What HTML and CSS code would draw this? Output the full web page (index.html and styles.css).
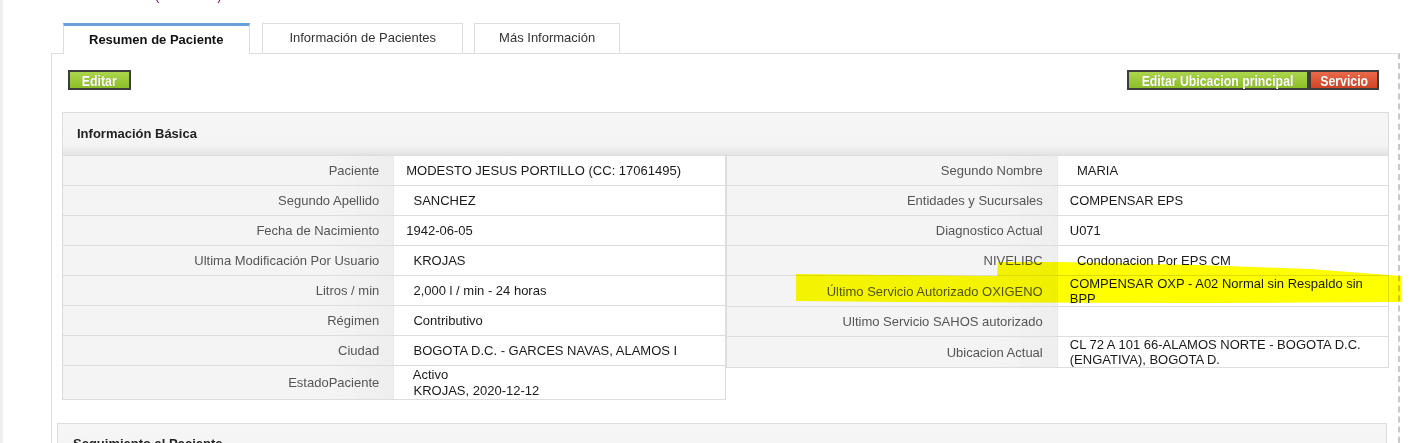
FILE: index.html
```html
<!DOCTYPE html>
<html lang="es">
<head>
  <meta charset="UTF-8">
  <title>Resumen de Paciente</title>
  <link rel="stylesheet" href="styles.css">
</head>
<body>

<div class="page">
  <h2 class="patient-title">(17061495)</h2>

  <ul class="tab-nav">
    <li class="tab active">Resumen de Paciente</li>
    <li class="tab">Información de Pacientes</li>
    <li class="tab">Más Información</li>
  </ul>

  <div class="tab-panel">
    <div class="toolbar">
      <button class="btn btn-green btn-editar"><span>Editar</span></button>
      <div class="toolbar-right">
        <button class="btn btn-green btn-ubicacion"><span>Editar Ubicacion principal</span></button>
        <button class="btn btn-red btn-servicio"><span>Servicio</span></button>
      </div>
    </div>

    <section class="box">
      <div class="box-header">Información Básica</div>
      <div class="info-grid">
        <table class="info-table">
          <tr><td class="label">Paciente</td><td class="value">MODESTO JESUS PORTILLO (CC: 17061495)</td></tr>
          <tr><td class="label">Segundo Apellido</td><td class="value">&nbsp; SANCHEZ</td></tr>
          <tr><td class="label">Fecha de Nacimiento</td><td class="value">1942-06-05</td></tr>
          <tr><td class="label">Ultima Modificación Por Usuario</td><td class="value">&nbsp; KROJAS</td></tr>
          <tr><td class="label">Litros / min</td><td class="value">&nbsp; 2,000 l / min - 24 horas</td></tr>
          <tr><td class="label">Régimen</td><td class="value">&nbsp; Contributivo</td></tr>
          <tr><td class="label">Ciudad</td><td class="value">&nbsp; BOGOTA D.C. - GARCES NAVAS, ALAMOS I</td></tr>
          <tr class="tall"><td class="label">EstadoPaciente</td><td class="value">&nbsp; Activo<br>&nbsp; KROJAS, 2020-12-12</td></tr>
        </table>
        <table class="info-table">
          <tr><td class="label">Segundo Nombre</td><td class="value">&nbsp; MARIA</td></tr>
          <tr><td class="label">Entidades y Sucursales</td><td class="value">COMPENSAR EPS</td></tr>
          <tr><td class="label">Diagnostico Actual</td><td class="value">U071</td></tr>
          <tr><td class="label">NIVELIBC</td><td class="value">&nbsp; Condonacion Por EPS CM</td></tr>
          <tr><td class="label">Último Servicio Autorizado OXIGENO</td><td class="value">COMPENSAR OXP - A02 Normal sin Respaldo sin BPP</td></tr>
          <tr><td class="label">Ultimo Servicio SAHOS autorizado</td><td class="value"></td></tr>
          <tr><td class="label">Ubicacion Actual</td><td class="value">CL 72 A 101 66-ALAMOS NORTE - BOGOTA D.C. (ENGATIVA), BOGOTA D.</td></tr>
        </table>
      </div>
    </section>

    <section class="box box-follow">
      <div class="box-header">Seguimiento al Paciente</div>
    </section>
  </div>
</div>

<!-- marker highlight drawn over the screenshot -->
<svg class="marker" width="1417" height="443" viewBox="0 0 1417 443">
  <polygon points="796,274 997,276 998,262 1060,262 1200,265 1310,269 1401,276 1402,302 1200,303 900,302 796,301" fill="#ffff00"/>
</svg>

</body>
</html>
```

FILE: styles.css
```css
* {
  box-sizing: border-box;
}

body {
  margin: 0;
  font-family: "Liberation Sans", Arial, sans-serif;
  font-size: 13px;
  color: #222;
  background: linear-gradient(to right, #efefef 0, #efefef 3px, #fff 3px);
  overflow: hidden;
  position: relative;
}

.page {
  padding: 0 17px 0 51px;
}

.patient-title {
  margin: -12px 0 0;
  padding-left: 104px;
  font-size: 13px;
  line-height: 15px;
  font-weight: normal;
  color: #800080;
}

/* Tabs */
.tab-nav {
  list-style: none;
  margin: 20px 0 0;
  padding: 0 0 0 12px;
  display: flex;
  align-items: flex-start;
  gap: 12px;
}

.tab {
  height: 30px;
  padding: 0 26px;
  border: 1px solid #ddd;
  border-bottom: none;
  line-height: 28px;
  color: #333;
  background: #fff;
}

.tab:last-child {
  margin-left: -1px;
  padding: 0 24px;
}

.tab.active {
  height: 31px;
  margin-bottom: -1px;
  padding: 0 26px 0 25px;
  border-top: 3px solid #6a9fdc;
  line-height: 27px;
  font-weight: bold;
  color: #111;
  position: relative;
}

.tab-panel {
  border-top: 1px solid #ddd;
  border-left: 1px solid #ddd;
  border-right: 2px dashed #c8c8c8;
  padding: 16px 9px 0 10px;
  height: 420px;
}

/* Toolbar buttons */
.toolbar {
  display: flex;
  justify-content: space-between;
  margin: 0 10px 0 6px;
}

.toolbar-right {
  display: flex;
}

.btn {
  display: flex;
  justify-content: center;
  align-items: center;
  height: 20px;
  padding: 0;
  border: 2px solid #3c3c3c;
  font-family: "Liberation Sans", Arial, sans-serif;
  font-weight: bold;
  font-size: 15px;
  line-height: 15px;
  color: #fff;
  text-shadow: 0 0 1px rgba(0, 0, 0, 0.25);
  cursor: pointer;
  overflow: visible;
}

/* narrow face is not installed, squeeze the bold one */
.btn span {
  display: inline-block;
  white-space: nowrap;
  transform: scaleX(0.82);
  padding-top: 1px;
}

.btn-editar {
  width: 63px;
}

.btn-ubicacion {
  width: 182px;
}

.btn-servicio {
  width: 70px;
}

.btn-green {
  background: linear-gradient(#acd64c, #8cbf27);
}

.btn-red {
  background: linear-gradient(#e96a4c, #d04526);
}

/* Boxes */
.box {
  margin-top: 22px;
}

.box-header {
  height: 43px;
  padding: 0 14px;
  border: 1px solid #ddd;
  border-bottom: none;
  line-height: 42px;
  font-weight: bold;
  color: #222;
  background: linear-gradient(to bottom, #f6f6f6 0, #f4f4f4 78%, #e2e2e2 100%);
}

.box-follow {
  margin: 23px 2px 0 -5px;
}

.box-follow .box-header {
  padding-left: 15px;
  line-height: 40px;
}

.info-grid {
  display: flex;
  align-items: flex-start;
}

.info-table {
  flex: 1;
  border-collapse: collapse;
  table-layout: fixed;
  border: 1px solid #ddd;
}

.info-table td {
  height: 30px;
  padding: 0 12px;
  border: 1px solid #ddd;
  line-height: 15px;
  vertical-align: middle;
  width: 50%;
}

.info-table .tall td {
  height: 31px;
  line-height: 16px;
  padding-top: 1px;
}

.info-table .label {
  text-align: right;
  padding-right: 14px;
  color: #555;
  background: linear-gradient(to right, #f4f4f4 80%, #eeeeee 100%);
  border-right-color: #e8e8e8;
}

.info-table .value {
  padding-left: 12px;
  color: #1a1a1a;
  background: #fff;
}

/* marker annotation on top of the page */
.marker {
  position: absolute;
  top: 0;
  left: 0;
  pointer-events: none;
  mix-blend-mode: multiply;
  filter: blur(0.6px);
}
```
